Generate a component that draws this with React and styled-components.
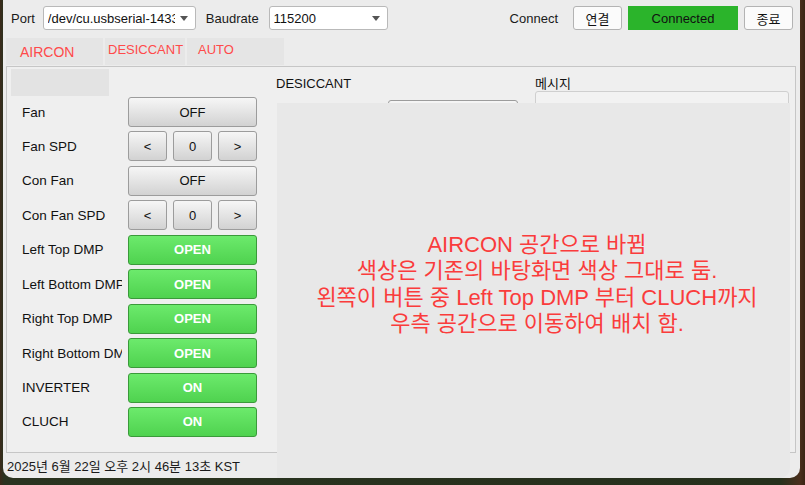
import React from "react";
import styled, { createGlobalStyle } from "styled-components";

const Global = createGlobalStyle`
  html, body { margin: 0; padding: 0; }
  body {
    width: 805px; height: 485px; overflow: hidden;
    background: #1e2616;
    font-family: "Liberation Sans", "Noto Sans CJK KR", Arial, sans-serif;
  }
`;

const Desktop = styled.div`
  width: 805px;
  height: 485px;
  display: flex;
  background: linear-gradient(90deg, #3b2a1a 0px, #2a3320 4px, #26301c 780px, #4a2e1c 800px, #3a2414 805px);
`;

const Window = styled.div`
  position: relative;
  margin-left: 3px;
  width: 797px;
  height: 478px;
  background: #ececec;
  border-radius: 0 0 10px 10px;
  overflow: hidden;
  display: flex;
  flex-direction: column;
  padding-top: 6px;
  box-sizing: border-box;
`;

const TopBar = styled.div`
  display: flex;
  align-items: center;
  height: 24px;
  padding: 0 7px 0 8px;
  font-size: 13px;
  color: #1a1a1a;
`;

const Label = styled.span`
  margin-left: ${(p) => p.$ml || 0}px;
  margin-right: ${(p) => p.$mr || 0}px;
  white-space: nowrap;
`;

const Select = styled.div`
  width: ${(p) => p.$w}px;
  height: 24px;
  box-sizing: border-box;
  background: #fff;
  border: 1px solid #b9b9b9;
  border-radius: 3px;
  display: flex;
  align-items: center;
  padding-left: 4px;
  font-size: 13px;
  color: #111;
  position: relative;
  overflow: hidden;
`;

const SelectText = styled.span`
  flex: 1;
  overflow: hidden;
  white-space: nowrap;
  margin-right: 20px;
`;

const Caret = styled.span`
  position: absolute;
  right: 7px;
  top: 9px;
  width: 0;
  height: 0;
  border-left: 4px solid transparent;
  border-right: 4px solid transparent;
  border-top: 5px solid #555;
`;

const Spacer = styled.div`
  flex: 1;
`;

const TopButton = styled.div`
  width: ${(p) => p.$w}px;
  height: 24px;
  box-sizing: border-box;
  margin-left: ${(p) => p.$ml || 0}px;
  display: flex;
  align-items: center;
  justify-content: center;
  font-size: 13px;
  color: #111;
  background: ${(p) => (p.$green ? "#2bb42b" : "#fbfbfb")};
  border: 1px solid ${(p) => (p.$green ? "#2bb42b" : "#b3b3b3")};
  border-radius: ${(p) => (p.$green ? "0" : "3px")};
`;

const TabBar = styled.div`
  display: flex;
  margin: 8px 0 0 3px;
  height: 27px;
`;

const Tab = styled.div`
  width: ${(p) => p.$w}px;
  margin-right: 2px;
  box-sizing: border-box;
  padding-left: ${(p) => p.$pl}px;
  padding-top: ${(p) => (p.$big ? 6 : 4)}px;
  background: #e5e5e5;
  color: #ff4a4a;
  font-size: ${(p) => (p.$big ? 14 : 13)}px;
  white-space: nowrap;
`;

const Panel = styled.div`
  margin: 1px 4px 0 3px;
  height: 387px;
  box-sizing: border-box;
  border: 1px solid #c6c6c6;
  background: #efefef;
  display: flex;
`;

const LeftCol = styled.div`
  width: 269px;
  display: flex;
  flex-direction: column;
`;

const Placeholder = styled.div`
  width: 98px;
  height: 27px;
  margin: 2px 0 0 4px;
  background: #e3e3e3;
`;

const Rows = styled.div`
  display: grid;
  grid-template-columns: 100px 129px;
  column-gap: 6px;
  grid-auto-rows: 30px;
  row-gap: 4.44px;
  margin: 1px 0 0 15px;
`;

const RowLabel = styled.div`
  display: flex;
  align-items: center;
  font-size: 13.5px;
  color: #111;
  white-space: nowrap;
  overflow: hidden;
  min-width: 0;
`;

const Btn = styled.div`
  height: 30px;
  box-sizing: border-box;
  display: flex;
  align-items: center;
  justify-content: center;
  border-radius: 3px;
  font-size: 13px;
  border: 1px solid ${(p) => (p.$on ? "#3a9a3a" : "#9c9c9c")};
  background: ${(p) =>
    p.$on
      ? "linear-gradient(#6cea6c, #4fd24f)"
      : "linear-gradient(#f6f6f6, #d2d2d2)"};
  color: ${(p) => (p.$on ? "#fff" : "#111")};
  font-weight: ${(p) => (p.$on ? 700 : 400)};
`;

const Stepper = styled.div`
  display: grid;
  grid-template-columns: 39px 39px 39px;
  column-gap: 6px;
`;

const MidCol = styled.div`
  width: 259px;
  display: flex;
  flex-direction: column;
`;

const SectionTitle = styled.div`
  font-size: 13px;
  color: #111;
  margin-top: ${(p) => p.$mt || 0}px;
  height: ${(p) => p.$h || 16}px;
`;

const MidButton = styled(Btn)`
  width: 130px;
  margin: 8px 0 0 112px;
`;

const RightCol = styled.div`
  flex: 1;
  display: flex;
  flex-direction: column;
`;

const MessageBox = styled.div`
  width: 254px;
  height: 200px;
  box-sizing: border-box;
  border: 1px solid #cfcfcf;
  border-radius: 3px;
  background: #f2f2f2;
`;

const Footer = styled.div`
  height: 25px;
  display: flex;
  align-items: center;
  padding-left: 4px;
  font-size: 13px;
  color: #1a1a1a;
`;

const Overlay = styled.div`
  position: absolute;
  left: 274px;
  top: 103px;
  width: 513px;
  height: 375px;
  background: #e8e8e8;
  border-radius: 0 0 10px 0;
  display: flex;
  flex-direction: column;
  align-items: center;
  justify-content: center;
  padding: 0 0 12px 7px;
  box-sizing: border-box;
  color: #fa3c3c;
  font-size: 22px;
  line-height: 26.5px;
  text-align: center;
  white-space: nowrap;
`;

const rows = [
  { label: "Fan", type: "btn", text: "OFF" },
  { label: "Fan SPD", type: "step" },
  { label: "Con Fan", type: "btn", text: "OFF" },
  { label: "Con Fan SPD", type: "step" },
  { label: "Left Top DMP", type: "btn", text: "OPEN", on: true },
  { label: "Left Bottom DMP", type: "btn", text: "OPEN", on: true },
  { label: "Right Top DMP", type: "btn", text: "OPEN", on: true },
  { label: "Right Bottom DMP", type: "btn", text: "OPEN", on: true },
  { label: "INVERTER", type: "btn", text: "ON", on: true },
  { label: "CLUCH", type: "btn", text: "ON", on: true },
];

export default function App() {
  return (
    <>
      <Global />
      <Desktop>
        <Window>
          <TopBar>
            <Label $mr={8}>Port</Label>
            <Select $w={153}>
              <SelectText>/dev/cu.usbserial-1433</SelectText>
              <Caret />
            </Select>
            <Label $ml={10} $mr={10}>Baudrate</Label>
            <Select $w={119}>
              <SelectText>115200</SelectText>
              <Caret />
            </Select>
            <Spacer />
            <Label $mr={15}>Connect</Label>
            <TopButton $w={49}>연결</TopButton>
            <TopButton $w={110} $ml={6} $green>Connected</TopButton>
            <TopButton $w={49} $ml={6}>종료</TopButton>
          </TopBar>
          <TabBar>
            <Tab $w={97} $pl={14} $big>AIRCON</Tab>
            <Tab $w={80} $pl={3}>DESICCANT</Tab>
            <Tab $w={97} $pl={11}>AUTO</Tab>
          </TabBar>
          <Panel>
            <LeftCol>
              <Placeholder />
              <Rows>
                {rows.map((r) => (
                  <React.Fragment key={r.label}>
                    <RowLabel>{r.label}</RowLabel>
                    {r.type === "step" ? (
                      <Stepper>
                        <Btn>&lt;</Btn>
                        <Btn>0</Btn>
                        <Btn>&gt;</Btn>
                      </Stepper>
                    ) : (
                      <Btn $on={r.on}>{r.text}</Btn>
                    )}
                  </React.Fragment>
                ))}
              </Rows>
            </LeftCol>
            <MidCol>
              <SectionTitle $mt={9}>DESICCANT</SectionTitle>
              <MidButton>OFF</MidButton>
            </MidCol>
            <RightCol>
              <SectionTitle $mt={6} $h={18}>메시지</SectionTitle>
              <MessageBox />
            </RightCol>
          </Panel>
          <Footer>2025년 6월 22일 오후 2시 46분 13초 KST</Footer>
          <Overlay>
            <div>AIRCON 공간으로 바뀜</div>
            <div>색상은 기존의 바탕화면 색상 그대로 둠.</div>
            <div>왼쪽이 버튼 중 Left Top DMP 부터 CLUCH까지</div>
            <div>우측 공간으로 이동하여 배치 함.</div>
          </Overlay>
        </Window>
      </Desktop>
    </>
  );
}
